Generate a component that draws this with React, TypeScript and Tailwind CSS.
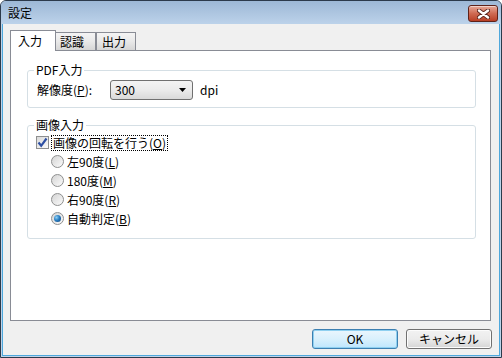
import React from "react";

function U({ c }: { c: string }) {
  return <span className="underline underline-offset-[1px]">{c}</span>;
}

function Radio({ checked, children }: { checked?: boolean; children: React.ReactNode }) {
  return (
    <div className="h-[19px] flex items-center pl-[23px]">
      <div className="w-[13px] h-[13px] rounded-full border border-[#8e8f8f] bg-gradient-to-br from-[#d4d4d4] to-[#fbfbfb] flex items-center justify-center">
        {checked && (
          <div className="w-[7px] h-[7px] rounded-full bg-[radial-gradient(circle_at_35%_35%,#8fd1f5_0%,#2a7fc3_45%,#0d3f74_100%)]" />
        )}
      </div>
      <span className="ml-[3px] leading-none">{children}</span>
    </div>
  );
}

function Group({ label, className, children }: { label: string; className: string; children: React.ReactNode }) {
  return (
    <div className={`relative border border-[#d5dfe5] rounded-[3px] ${className}`}>
      <span className="absolute left-[6px] top-[-8px] bg-white px-[2px] leading-[14px]">{label}</span>
      {children}
    </div>
  );
}

export default function App() {
  return (
    <div className="w-[502px] h-[358px] bg-white font-['Noto_Sans_CJK_JP',sans-serif] text-[12px] text-black">
      <div className="w-full h-full flex flex-col border border-[#2c3a4b] rounded-t-[6px] bg-[#bed3ea] overflow-hidden">
        {/* title bar */}
        <div className="h-[23px] shrink-0 flex items-start justify-between pl-[7px] pr-[3px] bg-gradient-to-b from-[#9db8d6] to-[#bcd2ea]">
          <span className="mt-[5px] leading-[14px] text-[12px]">設定</span>
          <div className="mt-[4px] w-[30px] h-[17px] rounded-[3px] border border-[#5e2219] bg-gradient-to-b from-[#e6a898] via-[#cf6a52] to-[#b83e24] shadow-[inset_0_1px_0_rgba(255,255,255,0.5)] flex items-center justify-center">
            <svg width="13" height="10" viewBox="0 0 13 10">
              <path d="M2 1.5 L11 8.5 M11 1.5 L2 8.5" stroke="#5a241c" strokeWidth="4.2" strokeLinecap="round" />
              <path d="M2 1.5 L11 8.5 M11 1.5 L2 8.5" stroke="#ffffff" strokeWidth="2.4" strokeLinecap="round" />
            </svg>
          </div>
        </div>
        {/* client */}
        <div className="flex-1 mx-[1px] mb-[1px] border-l border-r border-b border-[#4ea8dc] bg-[#f0f0f0] flex flex-col pt-[6px] pl-[7px] pr-[8px]">
          {/* tabs */}
          <div className="h-[20px] flex items-start">
            <div className="relative z-10 w-[46px] h-[21px] bg-white border-t border-l border-r border-[#898c95] flex items-center pl-[7px] leading-none">
              入力
            </div>
            <div className="mt-[2px] w-[40px] h-[18px] border-t border-r border-[#898c95] bg-gradient-to-b from-[#f4f4f4] via-[#e9e9e9] to-[#d6d6d6] flex items-center pl-[4px] leading-none">
              認識
            </div>
            <div className="mt-[2px] w-[40px] h-[18px] border-t border-l border-r border-[#898c95] bg-gradient-to-b from-[#f4f4f4] via-[#e9e9e9] to-[#d6d6d6] flex items-center pl-[5px] leading-none">
              出力
            </div>
          </div>
          {/* panel */}
          <div className="w-[481px] h-[271px] border border-[#898c95] bg-white flex flex-col pl-[16px] pt-[19px]">
            <Group label="PDF入力" className="w-[449px] h-[38px] pt-[9px]">
              <div className="h-[20px] flex items-center pl-[9px]">
                <span className="w-[73px] leading-none">
                  解像度(<U c="P" />):
                </span>
                <div className="w-[83px] h-[20px] rounded-[3px] border border-[#707070] bg-gradient-to-b from-[#f3f3f3] via-[#ebebeb] to-[#d9d9d9] flex items-center justify-between pl-[4px] pr-[6px]">
                  <span className="leading-none">300</span>
                  <svg width="7" height="4" viewBox="0 0 7 4">
                    <path d="M0 0 L7 0 L3.5 4 Z" fill="#000" />
                  </svg>
                </div>
                <span className="ml-[7px] leading-none">dpi</span>
              </div>
            </Group>
            <Group label="画像入力" className="mt-[17px] w-[449px] h-[114px] pt-[7px]">
              <div className="h-[19px] flex items-center pl-[8px]">
                <div className="w-[13px] h-[13px] border border-[#8e8f8f] bg-gradient-to-br from-[#dadada] to-[#fafafa] flex items-center justify-center">
                  <svg width="11" height="11" viewBox="0 0 11 11">
                    <path d="M1.5 5.5 L4.2 8.8 L9.5 1.5" stroke="#2d4fa3" strokeWidth="2.2" fill="none" />
                  </svg>
                </div>
                <span className="ml-[2px] px-[1px] h-[16px] flex items-center border border-dotted border-black leading-none">
                  画像の回転を行う(<U c="O" />)
                </span>
              </div>
              <Radio>
                左90度(<U c="L" />)
              </Radio>
              <Radio>
                180度(<U c="M" />)
              </Radio>
              <Radio>
                右90度(<U c="R" />)
              </Radio>
              <Radio checked>
                自動判定(<U c="B" />)
              </Radio>
            </Group>
          </div>
          {/* buttons */}
          <div className="mt-[8px] h-[20px] flex justify-end gap-[8px] -mr-[1px]">
            <div className="w-[86px] h-[20px] rounded-[3px] border border-[#3c7fb1] bg-gradient-to-b from-[#eaf6fd] via-[#d9f0fc] to-[#bee6fd] shadow-[inset_0_0_0_1px_#8fd0f0] flex items-center justify-center leading-none">
              OK
            </div>
            <div className="w-[86px] h-[20px] rounded-[3px] border border-[#707070] bg-gradient-to-b from-[#f2f2f2] via-[#ebebeb] to-[#d5d5d5] shadow-[inset_0_0_0_1px_#fcfcfc] flex items-center justify-center leading-none">
              キャンセル
            </div>
          </div>
        </div>
      </div>
    </div>
  );
}
